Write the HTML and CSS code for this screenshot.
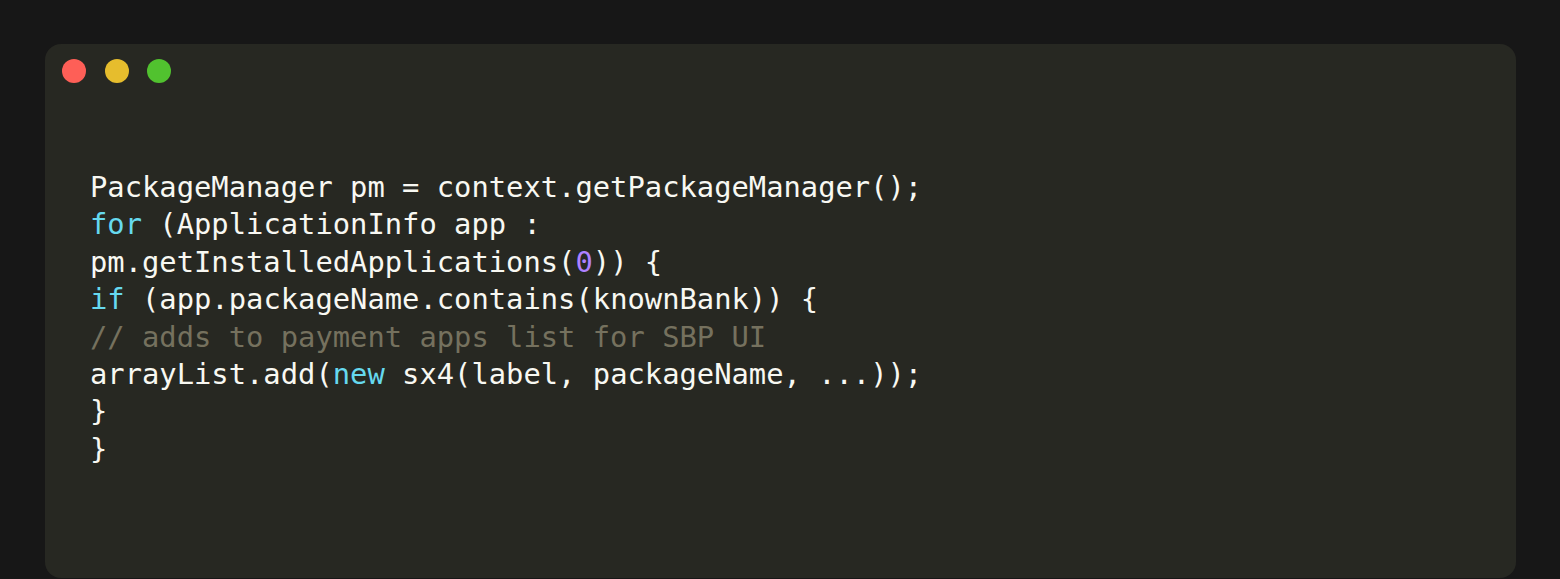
FILE: index.html
```html
<!DOCTYPE html>
<html>
<head>
<meta charset="utf-8">
<link rel="stylesheet" href="styles.css">
</head>
<body>
<div class="page">
  <div class="window">
    <div class="titlebar">
      <span class="dot red"></span>
      <span class="dot yellow"></span>
      <span class="dot green"></span>
    </div>
<pre class="code"><code>PackageManager pm = context.getPackageManager();
<span class="kw">for</span> (ApplicationInfo app :
pm.getInstalledApplications(<span class="num">0</span>)) {
<span class="kw">if</span> (app.packageName.contains(knownBank)) {
<span class="cm">// adds to payment apps list for SBP UI</span>
arrayList.add(<span class="kw">new</span> sx4(label, packageName, ...));
}
}</code></pre>
  </div>
</div>
</body>
</html>
```

FILE: styles.css
```css
html, body {
  margin: 0;
  padding: 0;
  background: #171717;
  height: 100%;
  overflow: hidden;
}
.page {
  padding: 44px 44px 0 45px;
}
.window {
  background: #272822;
  border-radius: 16px;
  height: 534px;
  padding: 15px 0 0 0;
  box-sizing: border-box;
}
.titlebar {
  display: flex;
  gap: 18.5px;
  padding: 0 0 0 17px;
}
.dot {
  width: 24px;
  height: 24px;
  border-radius: 50%;
  display: block;
}
.red { background: #fe5f57; }
.yellow { background: #e6bd2d; }
.green { background: #51c22f; }
.code {
  margin: 86px 0 0 45px;
  font-family: "DejaVu Sans Mono", "Liberation Mono", monospace;
  font-size: 28.8px;
  line-height: 37.4px;
  color: #f8f8f2;
}
.kw { color: #66d9ef; }
.num { color: #ae81ff; }
.cm { color: #75715e; }
```
